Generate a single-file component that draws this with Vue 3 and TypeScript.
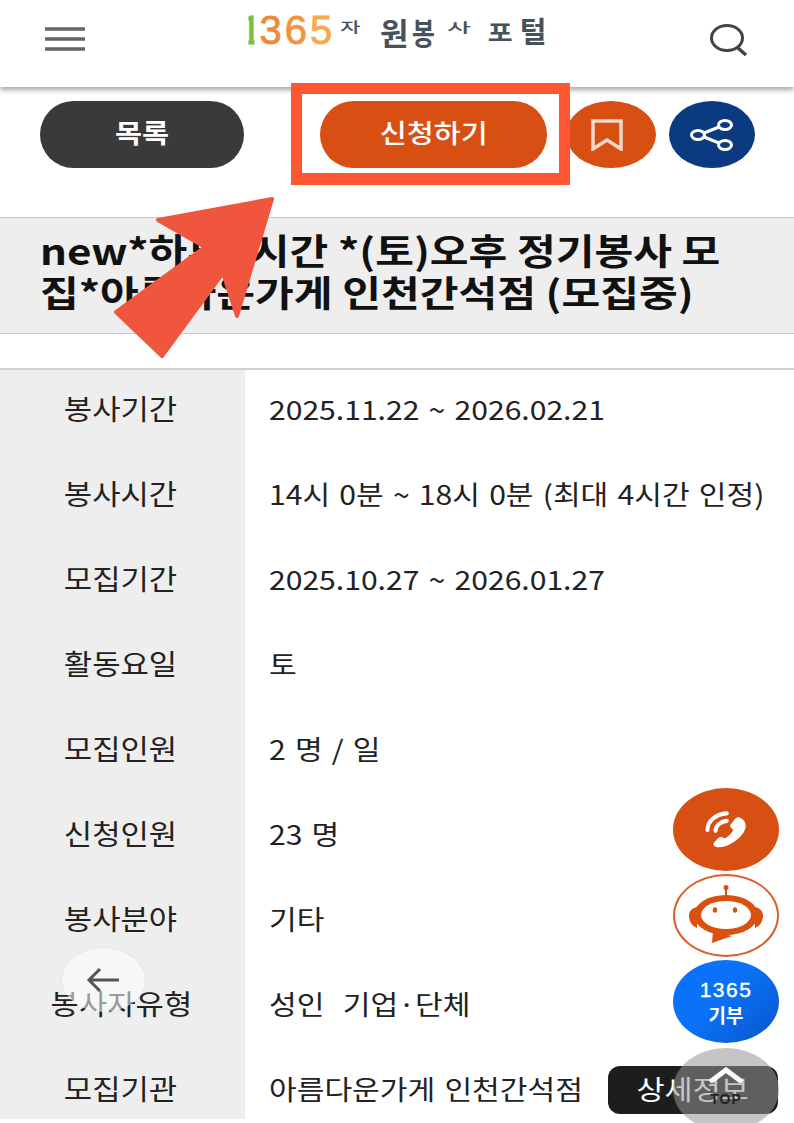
<script setup lang="ts">
const rows: [string, string][] = [
  ['봉사기간', '2025.11.22 ~ 2026.02.21'],
  ['봉사시간', '14시 0분 ~ 18시 0분 (최대 4시간 인정)'],
  ['모집기간', '2025.10.27 ~ 2026.01.27'],
  ['활동요일', '토'],
  ['모집인원', '2 명 / 일'],
  ['신청인원', '23 명'],
  ['봉사분야', '기타'],
  ['봉사자유형', '성인  기업·단체'],
  ['모집기관', '아름다운가게 인천간석점'],
]
</script>

<template>
  <div class="page">
    <header class="top">
      <svg class="menu" width="42" height="24" viewBox="0 0 42 24">
        <path d="M1 2h40M1 12h40M1 22h40" stroke="#666" stroke-width="3.5" fill="none" />
      </svg>
      <div class="logo">
        <span class="n1">1</span><span class="n3">3</span><span class="n6">6</span><span class="n5">5</span>
        <span class="c ja">자</span><span class="c won">원</span><span class="c bong">봉</span><span class="c sa">사</span><span class="c po">포</span><span class="c teol">털</span>
      </div>
      <svg class="search" width="40" height="32" viewBox="0 0 40 32">
        <ellipse cx="18" cy="14" rx="15.5" ry="12.5" fill="none" stroke="#444" stroke-width="3" />
        <path d="M29 24l8 7" stroke="#444" stroke-width="3.5" fill="none" />
      </svg>
    </header>

    <div class="actions">
      <button class="pill dark"><span>목록</span></button>
      <button class="pill apply"><span>신청하기</span></button>
      <button class="circle mark">
        <svg width="34" height="32" viewBox="0 0 34 32">
          <path d="M3 2h28v28L17 21 3 30z" fill="none" stroke="#f6d9c8" stroke-width="3.5" />
        </svg>
      </button>
      <button class="circle share">
        <svg width="44" height="32" viewBox="0 0 44 32">
          <g fill="none" stroke="#fff" stroke-width="3">
            <ellipse cx="35" cy="6" rx="6.5" ry="4.5" />
            <ellipse cx="8" cy="16" rx="6.5" ry="4.5" />
            <ellipse cx="35" cy="26" rx="6.5" ry="4.5" />
            <path d="M14 14l15-6M14 18l15 6" />
          </g>
        </svg>
      </button>
    </div>

    <h1 class="title"><span>new*하루4시간 *(토)오후 정기봉사 모집*아름다운가게 인천간석점 (모집중)</span></h1>

    <div class="table">
      <template v-for="r in rows" :key="r[0]">
        <div class="th"><span>{{ r[0] }}</span></div>
        <div class="td"><span>{{ r[1] }}</span></div>
      </template>
    </div>

    <div class="redbox"></div>
    <svg class="arrow" width="170" height="170" viewBox="110 195 170 170">
      <path
        d="M272 199L158 220L205 247L116 312L162 356L223 273L237 316Z"
        fill="#f0563d"
        stroke="#f0563d"
        stroke-width="4"
        stroke-linejoin="round"
      />
    </svg>

    <button class="back">
      <svg width="34" height="26" viewBox="0 0 34 26">
        <path d="M33 13H3M14 2L3 13l11 11" fill="none" stroke="#555" stroke-width="3" />
      </svg>
    </button>

    <div class="floats">
      <div class="fab phone">
        <svg width="50" height="40" viewBox="0 0 62 48" preserveAspectRatio="none">
          <path
            d="M48 9c5 2 9 7 7 13-2 7-8 13-17 18-7 4-15 6-20 4-3-1-3-4-1-6l4-4c2-2 4-2 6-1l3 1c4-2 8-6 10-10l-3-3c-1-2-1-3 1-5l5-6c1-1 3-2 5-1z"
            fill="#fff"
          />
          <path d="M8 24C8 13 18 5 32 4M18 25c0-6 6-11 14-12" fill="none" stroke="#fff" stroke-width="5" stroke-linecap="round" />
        </svg>
      </div>
      <div class="fab bot">
        <svg width="76" height="62" viewBox="0 0 76 62">
          <g fill="#d9500f">
            <circle cx="38" cy="2.5" r="2.5" />
            <rect x="37" y="4" width="2" height="8" />
            <path d="M9 22c-5 1-8 4-8 9s3 10 8 12zM67 22c5 1 8 4 8 9s-3 10-8 12z" />
            <ellipse cx="38" cy="30" rx="32" ry="20" />
            <path d="M25 46l-1 12 20-7z" />
          </g>
          <ellipse cx="38" cy="30" rx="25" ry="14" fill="#fff" />
          <ellipse cx="27" cy="25" rx="2.2" ry="2.8" fill="#d9500f" />
          <ellipse cx="47" cy="25" rx="2.2" ry="2.8" fill="#d9500f" />
        </svg>
      </div>
      <div class="fab give">
        <span class="give-n">1365</span>
        <span class="give-t">기부</span>
      </div>
    </div>

    <div class="detail"><span>상세정보</span></div>
    <div class="totop">
      <svg width="40" height="16" viewBox="0 0 40 16">
        <path d="M4 15L20 3l16 12" fill="none" stroke="#fff" stroke-width="5" />
      </svg>
      <span>TOP</span>
    </div>
  </div>
</template>

<style scoped>
.page {
  position: relative;
  width: 794px;
  height: 1123px;
  overflow: hidden;
  background: #fff;
  color: #222;
  font-family: "Noto Sans CJK KR", "Noto Sans", sans-serif;
}
button {
  border: 0;
  padding: 0;
  font-family: inherit;
}
.top {
  height: 87px;
  box-sizing: border-box;
  padding: 0 44px;
  display: flex;
  align-items: flex-start;
  justify-content: space-between;
  box-shadow: 0 3px 5px rgba(0, 0, 0, 0.35);
}
.menu {
  margin-top: 27px;
}
.search {
  margin-top: 24px;
  margin-right: 1px;
}
.logo {
  display: flex;
  align-items: flex-start;
  width: 300px;
  height: 50px;
  margin-top: 10px;
  color: #47525a;
  font-weight: 700;
  line-height: 1;
  white-space: nowrap;
}
.n1,
.n3,
.n6,
.n5 {
  font-family: "Liberation Sans", sans-serif;
  font-size: 40px;
  font-weight: 400;
  letter-spacing: 3px;
  -webkit-text-stroke: 0.8px currentColor;
}
/* only the stem of the 1 shows in the logo */
.n1 {
  width: 22px;
  margin: 0 -2px 0 -8px;
  color: #7cc13c;
  clip-path: inset(3px 7px 3px 9px);
}
.n3 {
  color: #ef8a3c;
}
.n6 {
  color: #f29340;
}
.n5 {
  color: #f7aa4d;
}
.c {
  display: block;
  transform-origin: left top;
}
.ja {
  width: 40px;
  margin: 9px 0 0 5px;
  font-size: 22px;
  font-weight: 500;
  transform: scale(1, 0.6);
}
.won {
  width: 32px;
  margin-top: 6px;
  font-size: 31px;
}
.bong {
  width: 35px;
  margin-top: 6px;
  font-size: 31px;
  transform: scale(0.8, 1);
}
.sa {
  width: 41px;
  margin-top: 10px;
  font-size: 26px;
  font-weight: 500;
  transform: scale(1, 0.5);
}
.po {
  width: 32px;
  margin-top: 10px;
  font-size: 27px;
  transform: scale(1, 0.85);
}
.teol {
  width: 28px;
  margin-top: 6px;
  font-size: 29px;
}
.actions {
  display: flex;
  align-items: center;
  height: 67px;
  margin-top: 14px;
  padding-left: 40px;
}
.pill {
  height: 67px;
  padding-bottom: 6px;
  border-radius: 34px;
  color: #fff;
  font-size: 26px;
}
.pill span {
  display: inline-block;
  transform: scaleX(1.13);
}
.dark {
  width: 204px;
  background: #3a3a3a;
  font-weight: 700;
}
.apply {
  width: 227px;
  margin-left: 76px;
  background: #d84f13;
  font-weight: 500;
}
.circle {
  height: 67px;
  border-radius: 50%;
  display: flex;
  align-items: center;
  justify-content: center;
}
.mark {
  width: 90px;
  margin-left: 19px;
  padding-right: 8px;
  background: #d84f13;
}
.share {
  width: 86px;
  margin-left: 13px;
  background: #0b3a80;
}
.title {
  height: 117px;
  box-sizing: border-box;
  margin: 49px 0 0;
  padding: 10px 40px 0;
  background: #eee;
  border-top: 1px solid #c8c8c8;
  border-bottom: 1px solid #c8c8c8;
  color: #111;
  font-size: 36px;
  font-weight: 700;
  line-height: 42px;
}
.title span {
  display: block;
  width: 610px;
  transform: scaleX(1.17);
  transform-origin: left center;
}
.table {
  display: grid;
  grid-template-columns: 245px 1fr;
  grid-auto-rows: 85px;
  height: 749px;
  overflow: hidden;
  margin-top: 34px;
  border-top: 2px solid #d0d0d0;
}
.th {
  display: flex;
  align-items: center;
  justify-content: center;
  padding: 0 3px 10px 0;
  background: #eee;
  font-size: 28px;
}
.th span {
  transform: scaleX(1.1);
}
.td {
  display: flex;
  align-items: center;
  padding: 0 0 8px 24px;
  font-size: 27px;
  white-space: pre;
  word-spacing: 2.2px;
}
.td span {
  transform: scaleX(1.115);
  transform-origin: left center;
}
.redbox {
  position: absolute;
  left: 291px;
  top: 83px;
  width: 279px;
  height: 102px;
  box-sizing: border-box;
  border: solid #ff5733;
  border-width: 11px 11px 12px 11px;
}
.arrow {
  position: absolute;
  left: 110px;
  top: 195px;
}
.back {
  position: absolute;
  left: 62px;
  top: 948px;
  width: 83px;
  height: 64px;
  padding-right: 2px;
  border-radius: 50%;
  background: rgba(255, 255, 255, 0.55);
  display: flex;
  align-items: center;
  justify-content: center;
  box-shadow: 0 0 2px rgba(0, 0, 0, 0.1);
}
.floats {
  position: absolute;
  left: 673px;
  top: 788px;
  display: flex;
  flex-direction: column;
  gap: 3px;
}
.fab {
  width: 106px;
  height: 83px;
  box-sizing: border-box;
  border-radius: 50%;
  display: flex;
  flex-direction: column;
  align-items: center;
  justify-content: center;
}
.phone {
  background: #d84f13;
}
.bot {
  background: #fff;
  border: 2.5px solid #d9602a;
}
.give {
  background: linear-gradient(135deg, #0a72f8 45%, #0a55c8);
  color: #fff;
  line-height: 1;
}
.give-n {
  font-family: "Liberation Sans", sans-serif;
  font-size: 21px;
  letter-spacing: 1.5px;
  -webkit-text-stroke: 0.4px #fff;
}
.give-t {
  margin-top: 5px;
  font-size: 19px;
  font-weight: 700;
}
.detail {
  position: absolute;
  left: 608px;
  top: 1066px;
  width: 170px;
  height: 48px;
  border-radius: 12px;
  background: #1d1d1d;
  color: #fff;
  font-size: 27px;
  line-height: 46px;
  text-align: center;
}
.detail span {
  display: inline-block;
  transform: scaleX(1.13);
}
.totop {
  position: absolute;
  left: 673px;
  top: 1048px;
  width: 106px;
  height: 83px;
  padding-top: 19px;
  box-sizing: border-box;
  border-radius: 50%;
  background: rgba(150, 150, 150, 0.55);
  display: flex;
  flex-direction: column;
  align-items: center;
  color: #fff;
  font-family: "Liberation Sans", sans-serif;
  font-size: 14px;
  font-weight: 700;
  line-height: 14px;
  letter-spacing: 1px;
}
.totop span {
  color: #222;
  margin-top: 9px;
}
</style>
